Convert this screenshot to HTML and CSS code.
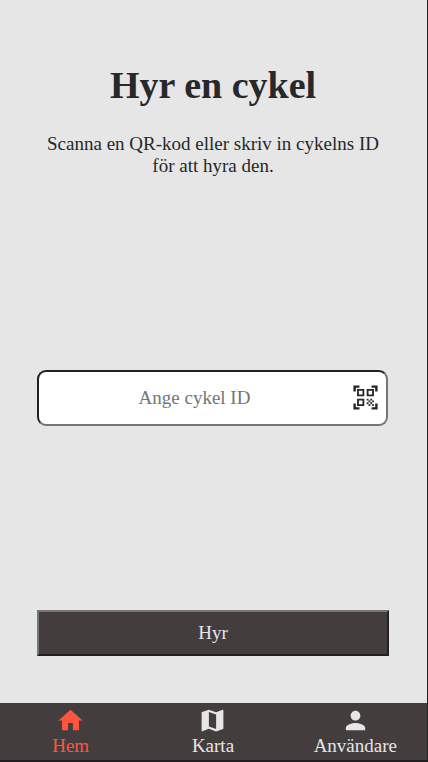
FILE: index.html
```html
<!DOCTYPE html>
<html lang="sv">
<head>
<meta charset="utf-8">
<title>Hyr en cykel</title>
<link rel="stylesheet" href="styles.css">
</head>
<body>
<main class="page">
  <h1 class="title">Hyr en cykel</h1>
  <p class="intro">Scanna en QR-kod eller skriv in cykelns ID för att hyra den.</p>
  <div class="field">
    <input class="field-input" type="text" placeholder="Ange cykel ID">
    <svg class="field-icon" viewBox="0 0 24 24"><path d="M9.500 6.500v3h-3v-3h3M11 5H5v6h6V5zm-1.500 9.500v3h-3v-3h3M11 13H5v6h6v-6zm6.500-6.500v3h-3v-3h3M19 5h-6v6h6V5zm-6 8h1.500v1.500H13V13zm1.500 1.500H16V16h-1.500v-1.500zM16 13h1.500v1.500H16V13zm-3 3h1.500v1.500H13V16zm1.500 1.500H16V19h-1.500v-1.500zM16 16h1.500v1.500H16V16zm1.500-1.500H19V16h-1.500v-1.500zm0 3H19V19h-1.500v-1.500zM22 7h-2V4h-3V2h5v5zm0 15v-5h-2v3h-3v2h5zM2 22h5v-2H4v-3H2v5zM2 2v5h2V4h3V2H2z"/></svg>
  </div>
  <button class="rent">Hyr</button>
</main>
<nav class="tabs">
  <a class="tab active"><svg viewBox="0 0 24 24"><path d="M10 20v-6h4v6h5v-8h3L12 3 2 12h3v8z"/></svg><span>Hem</span></a>
  <a class="tab"><svg viewBox="0 0 24 24"><path d="m20.500 3-.16.03L15 5.100 9 3 3.360 4.900c-.21.07-.36.25-.36.48V20.500c0 .28.22.5.5.5l.16-.03L9 18.900l6 2.100 5.640-1.900c.21-.07.36-.25.36-.48V3.500c0-.28-.22-.5-.5-.5zM15 19l-6-2.110V5l6 2.110V19z"/></svg><span>Karta</span></a>
  <a class="tab"><svg viewBox="0 0 24 24"><path d="M12 12c2.210 0 4-1.790 4-4s-1.790-4-4-4-4 1.790-4 4 1.790 4 4 4zm0 2c-2.670 0-8 1.340-8 4v2h16v-2c0-2.660-5.330-4-8-4z"/></svg><span>Användare</span></a>
</nav>
</body>
</html>
```
FILE: styles.css
```css
* { box-sizing: border-box; }
body {
  margin: 0;
  height: 762px;
  display: flex;
  flex-direction: column;
  overflow: hidden;
  background: #e6e6e6;
  color: #27282a;
  font-family: "Liberation Serif", serif;
  font-size: 19px;
  border-right: 1px solid #222;
  border-bottom: 2px solid #231f20;
}
.page {
  flex: 1;
  display: flex;
  flex-direction: column;
  padding: 64px 38px 47px 37px;
}
.title { margin: 0; font-size: 38px; line-height: 43px; text-align: center; }
.intro { margin: 26px 0 0; line-height: 22px; text-align: center; }
.field { position: relative; height: 56px; margin: 193px 0 184px; }
.field-input {
  display: block;
  width: 351px;
  height: 56px;
  padding: 0 37px 0 1px;
  border: 2px inset #767676;
  border-radius: 9px;
  background: #fff;
  font: inherit;
  text-align: center;
}
.field-input::placeholder { color: #757575; }
.field-icon { position: absolute; right: 9px; top: 13px; width: 29px; height: 29px; fill: #2a2425; }
.rent {
  height: 46px;
  border: 2px outset #767676;
  background: #433e3d;
  color: #e6e6e6;
  font: inherit;
  flex: none;
}
.tabs { height: 57px; display: grid; grid-template-columns: repeat(3, 1fr); background: #433e3d; }
.tab { display: flex; flex-direction: column; align-items: center; padding: 3px 1px 0 0; color: #e6e6e6; line-height: 22px; }
.tab svg { width: 29px; height: 29px; fill: currentColor; }
.active { color: #ff5440; }
```
